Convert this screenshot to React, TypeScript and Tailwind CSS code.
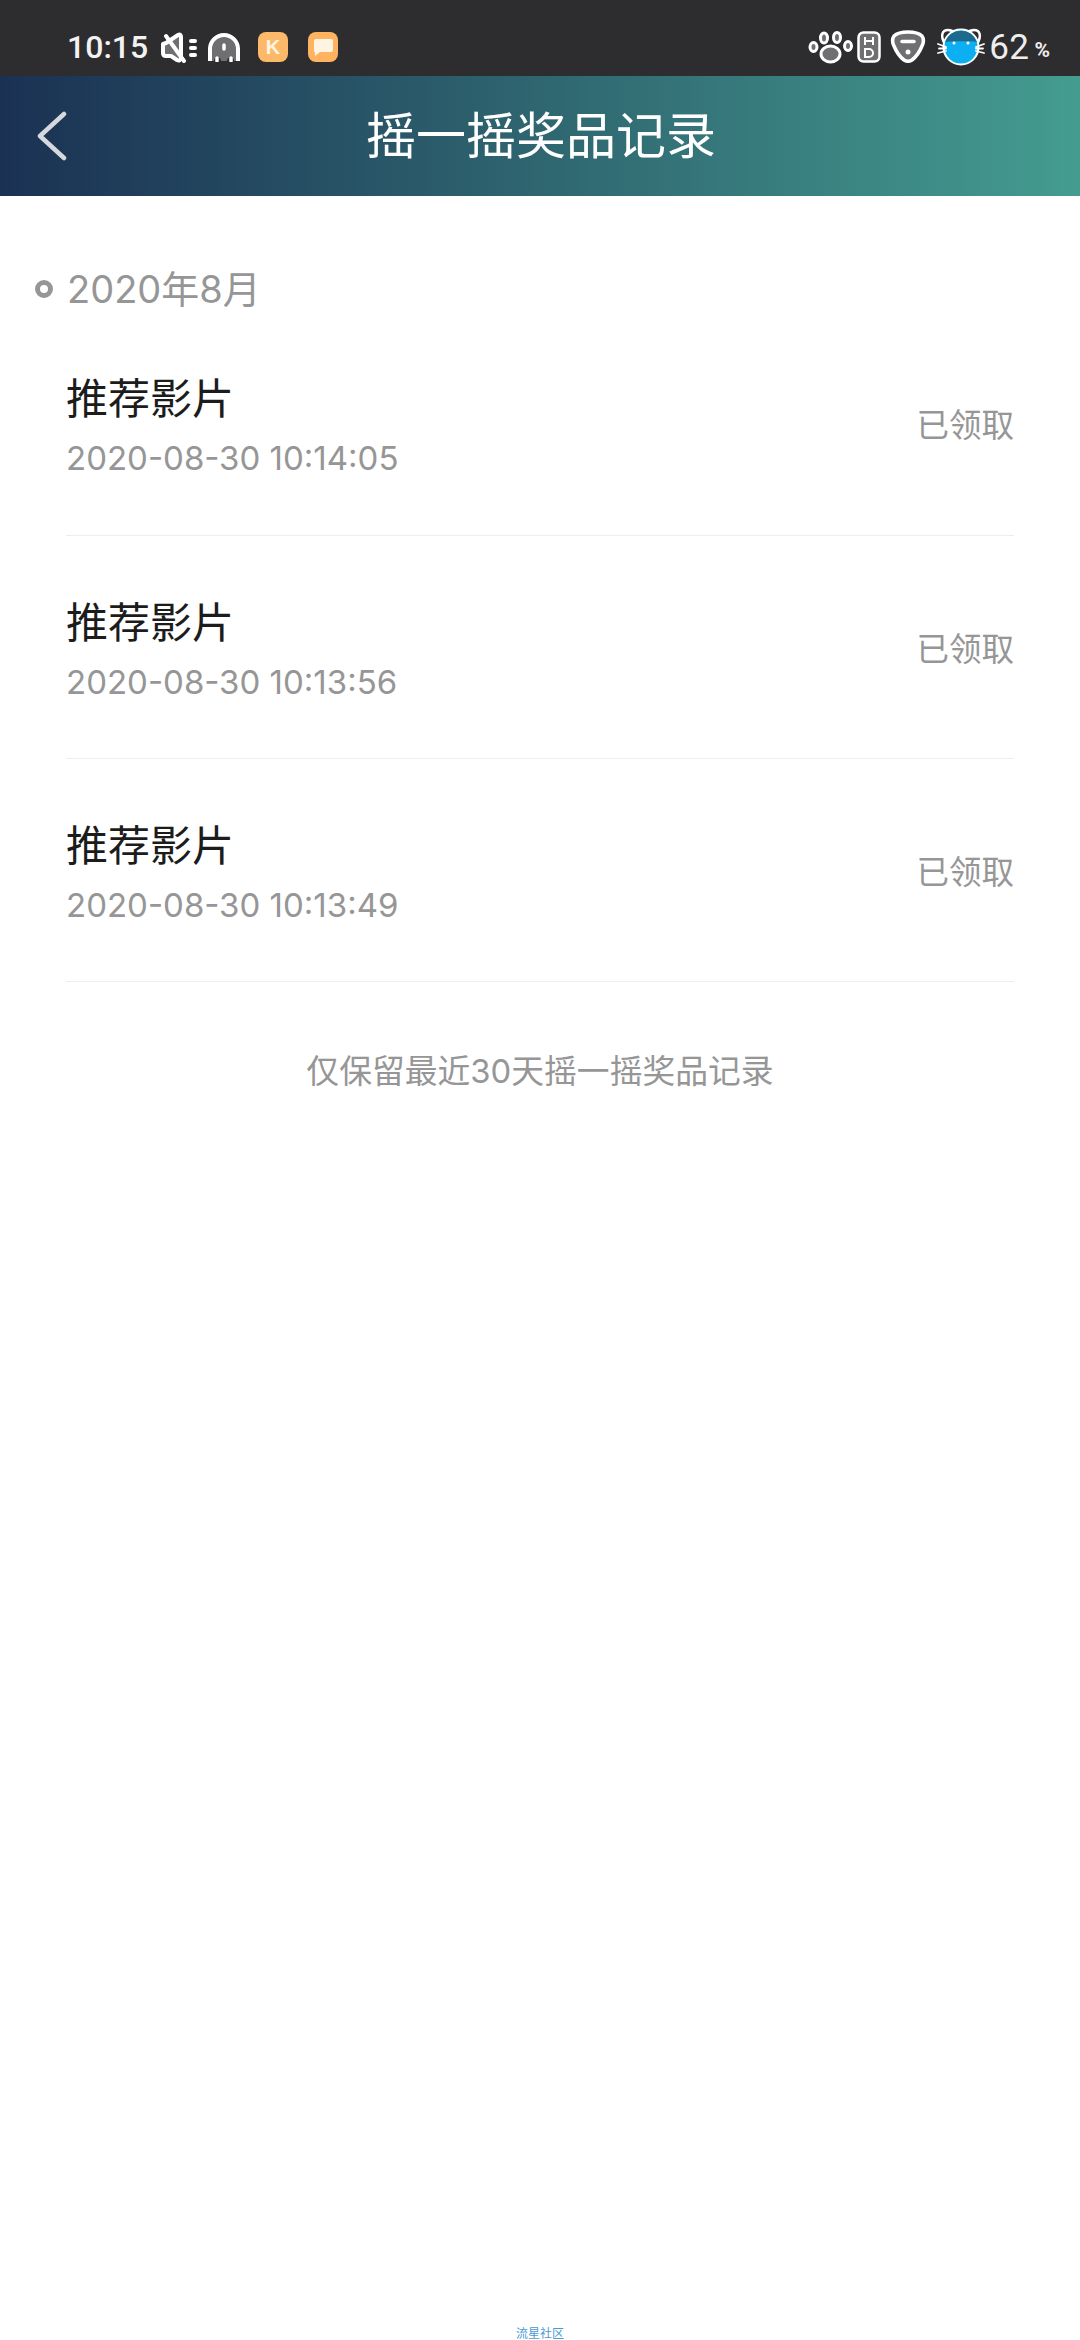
const rows = ["2020-08-30 10:14:05", "2020-08-30 10:13:56", "2020-08-30 10:13:49"]

function MuteIcon() {
  return (
    <svg width="38" height="31" viewBox="0 0 38 31" fill="none">
      <path d="M3 12l3-1 12-8c2-1 3 0 3 2v21c0 2-2 3-4 2l-6-4H6c-2 0-3-1-3-3z" fill="#6f6f72" stroke="#fff" strokeWidth="4" strokeLinejoin="round" />
      <path d="M6 4l18 25" stroke="#fff" strokeWidth="4" strokeLinecap="round" />
      <path d="M31 9h4M31 16h4M31 23h4" stroke="#fff" strokeWidth="4" strokeLinecap="round" />
    </svg>
  )
}

function GhostIcon() {
  return (
    <svg width="34" height="30" viewBox="0 0 34 30" fill="none">
      <path d="M2 29V17a15 15 0 0 1 30 0v12h-5a3 3 0 0 0-7 0h-6a3 3 0 0 0-7 0z" fill="#6f6f72" />
      <path d="M3 29V17a14 14 0 0 1 28 0v12" stroke="#fff" strokeWidth="4" />
      <path d="M17 13v4M10 26v3M24 26v3" stroke="#fff" strokeWidth="3.5" strokeLinecap="round" />
    </svg>
  )
}

function KBadge() {
  return (
    <div className="flex h-[30px] w-[30px] items-center justify-center rounded-[8px] bg-[#fdb96a]">
      <span className="font-['Liberation_Sans',sans-serif] text-[20px] leading-none font-bold text-[#fff3e2]">K</span>
    </div>
  )
}

function ChatBadge() {
  return (
    <div className="flex h-[30px] w-[30px] items-center justify-center rounded-[8px] bg-[#fdb35f]">
      <svg width="19" height="17" viewBox="0 0 19 17">
        <path d="M2 0h15a2 2 0 0 1 2 2v9a2 2 0 0 1-2 2H6l-5 4v-4a1 1 0 0 1-1-2V2a2 2 0 0 1 2-2z" fill="#fff3e2" />
      </svg>
    </div>
  )
}

function PawIcon() {
  return (
    <svg width="46" height="33" viewBox="0 0 46 33">
      <g fill="#6f6f72" stroke="#fff" strokeWidth="3">
        <ellipse cx="5.5" cy="16" rx="3.5" ry="4.5" />
        <ellipse cx="16" cy="7" rx="3.5" ry="5" />
        <ellipse cx="29" cy="6.5" rx="3.5" ry="5" />
        <ellipse cx="40" cy="15" rx="3.5" ry="4.5" />
        <ellipse cx="22.5" cy="23" rx="9.5" ry="8" />
      </g>
    </svg>
  )
}

function HdIcon() {
  return (
    <svg width="24" height="32" viewBox="0 0 24 32">
      <rect x="1.5" y="1.5" width="21" height="29" rx="5" fill="#6f6f72" stroke="#fff" strokeWidth="2.5" />
      <path d="M8 6v8M16 6v8M8 10h8M8 18v8h4a4 4 0 0 0 0-8z" fill="none" stroke="#fff" strokeWidth="2" />
    </svg>
  )
}

function ShieldIcon() {
  return (
    <svg width="36" height="34" viewBox="0 0 36 34">
      <path d="M18 2c6 0 11 1 14 4 2 3 2 6 0 10-2 5-6 11-10 14-3 2-5 2-8 0C10 27 6 21 4 16 2 12 2 9 4 6c3-3 8-4 14-4z" fill="#6f6f72" stroke="#fff" strokeWidth="3.5" />
      <path d="M12 11.5h12" stroke="#fff" strokeWidth="3.5" strokeLinecap="round" />
      <circle cx="18" cy="22" r="2.5" fill="#fff" />
    </svg>
  )
}

function CatIcon() {
  return (
    <svg width="48" height="38" viewBox="0 0 48 38" fill="none">
      <path d="M8 16C3 8 5 2 11 2c3 0 5 1 7 3h12c2-2 4-3 7-3 6 0 8 6 3 14" stroke="#fff" strokeWidth="2.5" />
      <circle cx="24" cy="19" r="17.5" fill="#0cb0f2" stroke="#fff" strokeWidth="2" />
      <path d="M8 14a17 17 0 0 1 32 0c-6-1-26-1-32 0z" fill="#1f6a8c" />
      <circle cx="17" cy="15" r="1.5" fill="#fff" />
      <circle cx="31" cy="15" r="1.5" fill="#fff" />
      <path d="M1 16l8 3M1 25l8-2M47 16l-8 3M47 25l-8-2M2 20.5h7M46 20.5h-7" stroke="#fff" strokeWidth="1.8" strokeLinecap="round" />
    </svg>
  )
}

export default function App() {
  return (
    <div className="flex min-h-[2340px] flex-col overflow-hidden bg-white font-['Inter','Noto_Sans_CJK_SC',sans-serif]">
      <div className="flex h-[76px] items-center justify-between bg-[#2d2d2f] pt-[18px] pr-[30px] pl-[67px]">
        <div className="flex items-center">
          <span className="w-[80px] font-['Roboto',sans-serif] text-[32px] leading-none font-medium text-[#f2f2f2]">10:15</span>
          <div className="ml-[13px]"><MuteIcon /></div>
          <div className="ml-[9px]"><GhostIcon /></div>
          <div className="ml-[17px]"><KBadge /></div>
          <div className="ml-[20px]"><ChatBadge /></div>
        </div>
        <div className="flex items-center">
          <PawIcon />
          <div className="ml-[3px]"><HdIcon /></div>
          <div className="ml-[9px]"><ShieldIcon /></div>
          <div className="ml-[11px]"><CatIcon /></div>
          <span className="ml-[4px] font-['Roboto',sans-serif] text-[35px] leading-none tracking-[0.5px] text-[#eeeeee]">62</span>
          <span className="mt-[6px] ml-[5px] font-['Roboto',sans-serif] text-[21px] leading-none font-bold text-[#eeeeee]">%</span>
        </div>
      </div>

      <div className="relative flex h-[120px] items-center justify-center bg-gradient-to-r from-[#1b3153] via-[#2f6670] to-[#449c90]">
        <svg className="absolute top-[35px] left-[36px]" width="32" height="50" viewBox="0 0 32 50" fill="none">
          <path d="M28 3L4 25l24 22" stroke="#d5d9dd" strokeWidth="4.5" strokeLinecap="round" strokeLinejoin="round" />
        </svg>
        <h1 className="ml-[2px] text-[50px] leading-none font-normal text-white">摇一摇奖品记录</h1>
      </div>

      <div className="pt-[64px]">
        <div className="flex h-[58px] items-center pl-[35px]">
          <span className="h-[18px] w-[18px] rounded-full border-[5px] border-[#969696]" />
          <span className="ml-[14px] text-[38px] leading-none text-[#969696]">2020年8月</span>
        </div>
        <div>
          {rows.map((time) => (
            <div key={time} className="mx-[66px] flex h-[223px] items-center justify-between border-b border-[#eeeeee] pt-[6px] first:h-[218px] first:pt-0">
              <div>
                <div className="text-[42px] leading-none text-[#1c1c1c]">推荐影片</div>
                <div className="mt-[22px] text-[33px] leading-none text-[#969696]">{time}</div>
              </div>
              <div className="text-[32.5px] leading-none text-[#969696]">已领取</div>
            </div>
          ))}
        </div>
      </div>

      <p className="mt-[73px] text-center text-[32.8px] leading-none text-[#969696]">仅保留最近30天摇一摇奖品记录</p>

      <div className="mt-auto text-center text-[12px] leading-[12px] text-[#4a9ad4]">流星社区</div>
    </div>
  )
}
